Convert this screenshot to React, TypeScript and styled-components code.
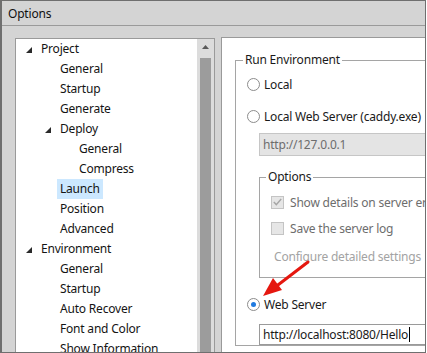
import React from "react";
import styled, { createGlobalStyle } from "styled-components";

const GlobalStyle = createGlobalStyle`
  html, body { margin: 0; padding: 0; background: #ffffff; }
  body {
    font-family: "Noto Sans", "Segoe UI", sans-serif;
    font-size: 12px;
    letter-spacing: -0.2px;
    color: #1a1a1a;
  }
  * { box-sizing: border-box; }
`;

const Window = styled.div`
  width: 426px;
  height: 353px;
  display: flex;
  flex-direction: column;
  border-style: solid;
  border-color: #6f6f6f;
  border-width: 1px 1px 1px 2px;
  background: #d4d4d4;
  overflow: hidden;
`;

const TitleBar = styled.div`
  height: 25px;
  flex: none;
  border-bottom: 1px solid #9a9a9a;
  padding: 1px 0 0 6px;
  line-height: 24px;
  font-size: 12px;
  color: #111;
`;

const Body = styled.div`
  flex: 1;
  min-height: 0;
  display: flex;
  align-items: stretch;
  gap: 6px;
  padding: 11px 0 0 13px;
`;

const TreePanel = styled.div`
  width: 200px;
  flex: none;
  margin-top: 1px;
  display: flex;
  background: #ffffff;
  border: 1px solid #9a9a9a;
  border-bottom: none;
`;

const TreeList = styled.div`
  flex: 1;
  overflow: hidden;
`;

const Row = styled.div<{ $level: number }>`
  height: 20px;
  display: flex;
  align-items: center;
  padding-left: ${(p) => 10 + p.$level * 19}px;
  white-space: nowrap;
`;

const Expander = styled.span`
  width: 12px;
  flex: none;
  display: flex;
  align-items: center;
  margin-top: 1px;
`;

const Label = styled.span<{ $selected?: boolean }>`
  padding: 0 3px;
  line-height: 20px;
  color: #141414;
  background: ${(p) => (p.$selected ? "#cce8ff" : "transparent")};
`;

const Scrollbar = styled.div`
  width: 17px;
  flex: none;
  background: #dcdcdc;
  display: flex;
  flex-direction: column;
  align-items: center;
  padding-top: 6px;
`;

const ThumbTrack = styled.div`
  margin-top: 9px;
  width: 11px;
  flex: 1;
  background: #9c9c9c;
`;

const ContentPanel = styled.div`
  flex: 1;
  min-width: 0;
  position: relative;
  overflow: hidden;
  background: #ffffff;
  border-top: 1px solid #9a9a9a;
  border-left: 1px solid #9a9a9a;
  padding: 14px 0 0 13px;
`;

const GroupBox = styled.fieldset<{ $ml?: number; $mt?: number; $pb?: number }>`
  margin: ${(p) => p.$mt ?? 0}px 0 0 ${(p) => p.$ml ?? 0}px;
  padding: 0 0 ${(p) => p.$pb ?? 0}px 11px;
  width: 260px;
  border: 1px solid #a5a5a5;
  min-width: 0;
`;

const Legend = styled.legend<{ $ml: number }>`
  padding: 0 2px;
  margin-left: ${(p) => p.$ml}px;
  line-height: 16px;
  color: #1a1a1a;
`;

const OptionRow = styled.div<{ $mt: number }>`
  height: 20px;
  margin-top: ${(p) => p.$mt}px;
  display: flex;
  align-items: center;
  white-space: nowrap;
`;

const RadioCircle = styled.span<{ $checked?: boolean }>`
  width: 13px;
  height: 13px;
  flex: none;
  border-radius: 50%;
  border: 1px solid #8c8c8c;
  background: #ffffff;
  margin-right: 4px;
  display: flex;
  align-items: center;
  justify-content: center;
  &::after {
    content: "";
    width: 5px;
    height: 5px;
    border-radius: 50%;
    background: ${(p) => (p.$checked ? "#1f7ae0" : "transparent")};
  }
`;

const CheckBox = styled.span`
  width: 13px;
  height: 13px;
  flex: none;
  border: 1px solid #c4c4c4;
  background: #e6e6e6;
  margin-right: 6px;
  display: flex;
  align-items: center;
  justify-content: center;
`;

const OptionText = styled.span<{ $disabled?: boolean }>`
  color: ${(p) => (p.$disabled ? "#6d6d6d" : "#1a1a1a")};
`;

const LinkText = styled.span`
  color: #a3a3a3;
  padding-left: 3px;
`;

const TextBox = styled.div<{ $disabled?: boolean; $mt: number; $h: number }>`
  margin: ${(p) => p.$mt}px 0 0 12px;
  height: ${(p) => p.$h}px;
  width: 260px;
  border: 1px solid ${(p) => (p.$disabled ? "#c6c6c6" : "#9a9a9a")};
  background: ${(p) => (p.$disabled ? "#e4e4e4" : "#ffffff")};
  color: ${(p) => (p.$disabled ? "#6d6d6d" : "#1a1a1a")};
  padding-left: 3px;
  display: flex;
  align-items: center;
  white-space: nowrap;
`;

const Caret = styled.span`
  display: inline-block;
  width: 1px;
  height: 15px;
  background: #000;
  margin-left: 1px;
`;

const ArrowOverlay = styled.svg`
  position: absolute;
  left: 0;
  top: 0;
  pointer-events: none;
`;

const Triangle = () => (
  <svg width="6" height="6" viewBox="0 0 6 6">
    <polygon points="6,0 6,6 0,6" fill="#2a2a2a" />
  </svg>
);

type Node = { label: string; level: number; expanded?: boolean; selected?: boolean };

const nodes: Node[] = [
  { label: "Project", level: 0, expanded: true },
  { label: "General", level: 1 },
  { label: "Startup", level: 1 },
  { label: "Generate", level: 1 },
  { label: "Deploy", level: 1, expanded: true },
  { label: "General", level: 2 },
  { label: "Compress", level: 2 },
  { label: "Launch", level: 1, selected: true },
  { label: "Position", level: 1 },
  { label: "Advanced", level: 1 },
  { label: "Environment", level: 0, expanded: true },
  { label: "General", level: 1 },
  { label: "Startup", level: 1 },
  { label: "Auto Recover", level: 1 },
  { label: "Font and Color", level: 1 },
  { label: "Show Information", level: 1 },
];

export default function App() {
  return (
    <>
      <GlobalStyle />
      <Window>
        <TitleBar>Options</TitleBar>
        <Body>
          <TreePanel>
            <TreeList>
              {nodes.map((n, i) => (
                <Row key={i} $level={n.level}>
                  <Expander>{n.expanded ? <Triangle /> : null}</Expander>
                  <Label $selected={n.selected}>{n.label}</Label>
                </Row>
              ))}
            </TreeList>
            <Scrollbar>
              <svg width="7" height="4" viewBox="0 0 7 4">
                <polygon points="3.5,0 7,4 0,4" fill="#5a5a5a" />
              </svg>
              <ThumbTrack />
            </Scrollbar>
          </TreePanel>
          <ContentPanel>
            <GroupBox>
              <Legend $ml={-4}>Run Environment</Legend>
              <OptionRow $mt={6}>
                <RadioCircle />
                <OptionText>Local</OptionText>
              </OptionRow>
              <OptionRow $mt={12}>
                <RadioCircle />
                <OptionText>Local Web Server (caddy.exe)</OptionText>
              </OptionRow>
              <TextBox $disabled $mt={7} $h={23}>
                http://127.0.0.1
              </TextBox>
              <GroupBox $ml={12} $mt={13} $pb={11}>
                <Legend $ml={-5}>Options</Legend>
                <OptionRow $mt={7}>
                  <CheckBox>
                    <svg width="9" height="8" viewBox="0 0 9 8">
                      <polyline points="0.8,4 3.3,6.6 8.2,1" fill="none" stroke="#a6a6a6" strokeWidth="1.4" />
                    </svg>
                  </CheckBox>
                  <OptionText $disabled>Show details on server error</OptionText>
                </OptionRow>
                <OptionRow $mt={6}>
                  <CheckBox />
                  <OptionText $disabled>Save the server log</OptionText>
                </OptionRow>
                <OptionRow $mt={8}>
                  <LinkText>Configure detailed settings</LinkText>
                </OptionRow>
              </GroupBox>
              <OptionRow $mt={16}>
                <RadioCircle $checked />
                <OptionText>Web Server</OptionText>
              </OptionRow>
              <TextBox $mt={10} $h={21}>
                http://localhost:8080/Hello
                <Caret />
              </TextBox>
            </GroupBox>
            <ArrowOverlay width="204" height="320">
              <line x1="86" y1="224" x2="52" y2="250" stroke="#e5170f" strokeWidth="3" strokeLinecap="round" />
              <polygon points="41,258 51,240 60,252" fill="#e5170f" />
            </ArrowOverlay>
          </ContentPanel>
        </Body>
      </Window>
    </>
  );
}
